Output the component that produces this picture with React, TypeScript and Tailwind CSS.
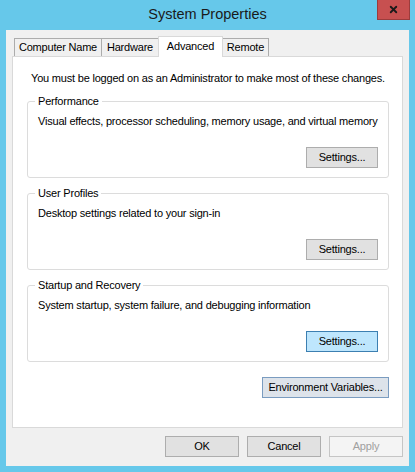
import { X } from 'lucide-react';

const font = { fontFamily: '"Liberation Sans", Arial, sans-serif' };

type BtnProps = {
    label: string;
    width: string;
    variant?: 'normal' | 'hover' | 'default' | 'disabled';
};

const Button = ({ label, width, variant = 'normal' }: BtnProps) => {
    const styles = {
        normal: 'bg-[#e1e1e1] border-[#adadad] text-[#000]',
        hover: 'bg-[#bee6fd] border-[#3c7fb1] text-[#000]',
        default: 'bg-[#dde3ea] border-[#7a9cc0] text-[#000]',
        disabled: 'bg-[#f4f4f4] border-[#c5c5c5] text-[#a0a0a0]',
    }[variant];
    return (
        <button className={`${width} h-[21px] border ${styles} text-[11px] tracking-[-0.2px] leading-[15px] whitespace-nowrap flex items-center justify-center`}>
            {label}
        </button>
    );
};

const Group = ({ title, text, className }: { title: string; text: string; className: string }) => (
    <fieldset className={`border border-[#dcdcdc] rounded-[3px] pl-[10px] pr-[10px] pb-[9px] ${className}`}>
        <legend className="-ml-[3px] px-[3px] text-[11px] tracking-[-0.2px] leading-[15px] whitespace-nowrap">{title}</legend>
        <div className="mt-[5px] text-[11px] tracking-[-0.2px] leading-[15px] whitespace-nowrap">{text}</div>
        <div className="flex justify-end mt-[18px]">
            <Button label="Settings..." width="w-[72px]" variant={title === 'Startup and Recovery' ? 'hover' : 'normal'} />
        </div>
    </fieldset>
);

const App = () => {
    return (
        <div className="w-[415px] h-[472px] bg-[#66c8ea] flex flex-col text-[#000]" style={font}>
            <div className="h-[30px] grid grid-cols-[1fr_auto_1fr] shrink-0">
                <div />
                <div className="text-[14.5px] leading-[29px] text-[#1a1a1a] whitespace-nowrap">System Properties</div>
                <div className="flex justify-end items-start pr-[5px]">
                    <div className="w-[33px] h-[20px] bg-[#c75050] border border-t-0 border-[#9b3c3c] flex items-center justify-center">
                        <X size={11} strokeWidth={4} color="#1a1a1a" />
                    </div>
                </div>
            </div>
            <div className="flex-1 mx-[6px] mb-[6px] bg-[#f0f0f0] flex flex-col px-[6px] pt-[6px]">
                <div className="flex h-[21px] -mb-[1px] relative z-10 pl-[2px] text-[11px] tracking-[-0.2px] whitespace-nowrap">
                    <div className="w-[88px] h-[18px] mt-[2px] border border-b-0 border-[#acacac] leading-[17px] text-center">Computer Name</div>
                    <div className="w-[56px] h-[18px] mt-[2px] border-t border-[#acacac] leading-[17px] text-center">Hardware</div>
                    <div className="w-[65px] h-[21px] bg-white border border-b-0 border-[#d9d9d9] leading-[18px] text-center">Advanced</div>
                    <div className="w-[46px] h-[18px] mt-[2px] border-t border-r border-[#acacac] leading-[17px] text-center">Remote</div>
                </div>
                <div className="h-[372px] bg-white border border-[#d9d9d9] flex flex-col pl-[14px] pr-[13px]">
                    <div className="mt-[14px] pl-[4px] text-[11px] tracking-[-0.2px] leading-[15px] whitespace-nowrap">
                        You must be logged on as an Administrator to make most of these changes.
                    </div>
                    <Group className="mt-[8px]" title="Performance" text="Visual effects, processor scheduling, memory usage, and virtual memory" />
                    <Group className="mt-[8px]" title="User Profiles" text="Desktop settings related to your sign-in" />
                    <Group className="mt-[8px]" title="Startup and Recovery" text="System startup, system failure, and debugging information" />
                    <div className="flex justify-end mt-[15px]">
                        <Button label="Environment Variables..." width="w-[127px]" variant="default" />
                    </div>
                </div>
                <div className="flex justify-end gap-[8px] mt-[8px]">
                    <Button label="OK" width="w-[74px]" />
                    <Button label="Cancel" width="w-[74px]" />
                    <Button label="Apply" width="w-[74px]" variant="disabled" />
                </div>
            </div>
        </div>
    );
};

export default App;
